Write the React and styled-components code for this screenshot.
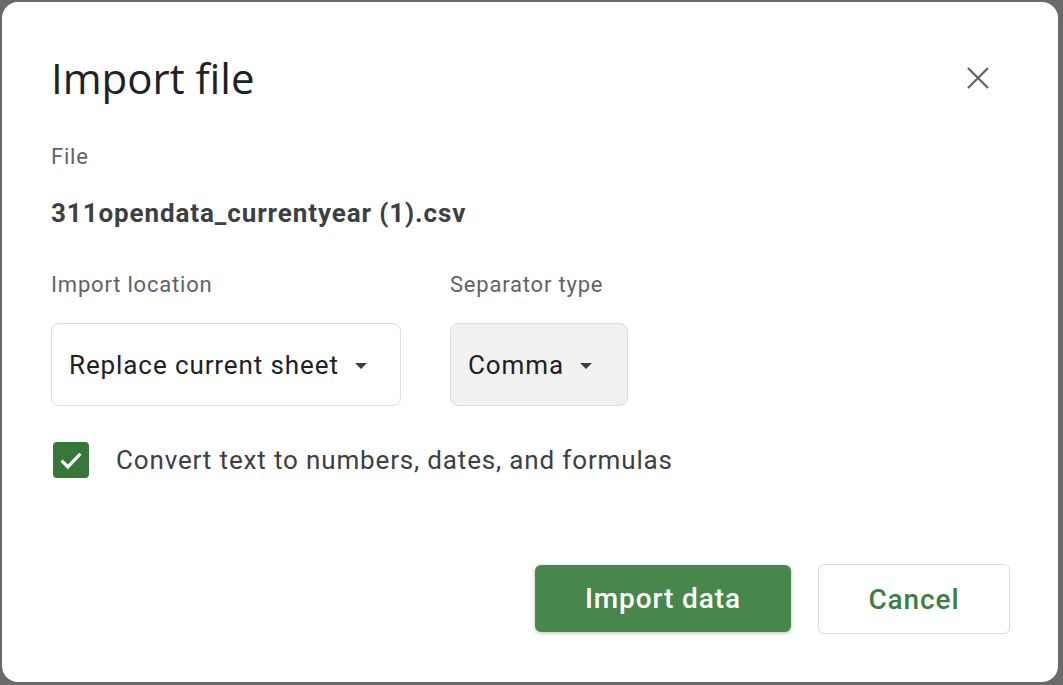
import styled, { createGlobalStyle } from "styled-components";

const Global = createGlobalStyle`
  html, body {
    margin: 0;
    padding: 0;
    background: #6a6a6a;
    font-family: Roboto, "Liberation Sans", Arial, sans-serif;
  }
  * { box-sizing: border-box; }
`;

// --- Styled components ---
const Dialog = styled.div`
  margin: 2px 5px 3px 2px;
  height: calc(100vh - 5px);
  background: #fff;
  border-radius: 16px;
  padding: 50px 48px 0 49px;
  display: flex;
  flex-direction: column;
`;

const Header = styled.div`
  display: flex;
  align-items: center;
  justify-content: space-between;
`;

const Title = styled.h1`
  margin: 0;
  font-family: "Open Sans", Roboto, sans-serif;
  font-weight: 400;
  font-size: 42px;
  line-height: 52px;
  color: #202124;
`;

const Close = styled.button`
  border: 0;
  background: none;
  padding: 0;
  width: 32px;
  height: 32px;
  margin-right: 16px;
  display: flex;
  align-items: center;
  justify-content: center;
  cursor: pointer;
`;

const Label = styled.div`
  font-size: 22px;
  line-height: 24px;
  letter-spacing: 0.8px;
  color: #5f6368;
  margin-top: ${({ top }) => top || 0}px;
`;

const FileName = styled.div`
  margin-top: 30px;
  font-size: 26px;
  line-height: 28px;
  letter-spacing: 0.9px;
  font-weight: 700;
  color: #3c4043;
`;

const Row = styled.div`
  display: flex;
  gap: 49px;
  margin-top: 46px;
`;

const Field = styled.div`
  display: flex;
  flex-direction: column;
  gap: 26px;
`;

const Select = styled.div`
  width: ${({ w }) => w}px;
  height: 83px;
  border: 1px solid #dadce0;
  border-radius: 8px;
  background: ${({ filled }) => (filled ? "#f1f1f1" : "#fff")};
  display: flex;
  align-items: center;
  padding-left: 17px;
  gap: 16px;
  font-size: 26px;
  letter-spacing: 0.9px;
  color: #202124;
`;

const Caret = styled.span`
  width: 0;
  height: 0;
  border-left: 6px solid transparent;
  border-right: 6px solid transparent;
  border-top: 6px solid #3c4043;
  margin-top: 2px;
`;

const CheckRow = styled.label`
  display: flex;
  align-items: center;
  gap: 27px;
  margin-top: 36px;
  margin-left: 2px;
  font-size: 26px;
  letter-spacing: 0.85px;
  color: #3c4043;
`;

const Box = styled.span`
  width: 36px;
  height: 36px;
  border-radius: 4px;
  background: #37773a;
  display: flex;
  align-items: center;
  justify-content: center;
`;

const Actions = styled.div`
  display: flex;
  justify-content: flex-end;
  gap: 27px;
  margin-top: 86px;
`;

const Button = styled.button`
  width: ${({ w }) => w}px;
  height: ${({ primary }) => (primary ? 67 : 70)}px;
  margin-top: ${({ primary }) => (primary ? 1 : 0)}px;
  border-radius: 6px;
  font-family: Roboto, sans-serif;
  font-size: 28px;
  font-weight: 500;
  letter-spacing: 0.9px;
  cursor: pointer;
  border: ${({ primary }) => (primary ? "0" : "1px solid #dadce0")};
  background: ${({ primary }) => (primary ? "#48874b" : "#fff")};
  color: ${({ primary }) => (primary ? "#fff" : "#3b7f41")};
  box-shadow: ${({ primary }) =>
    primary ? "0 1px 4px rgba(72,135,75,0.45)" : "none"};
`;

// --- Component ---
export default function App() {
  return (
    <>
      <Global />
      <Dialog>
        <Header>
          <Title>Import file</Title>
          <Close aria-label="Close">
            <svg width="24" height="24" viewBox="0 0 24 24">
              <path
                d="M2 2 L22 22 M22 2 L2 22"
                stroke="#5f6368"
                strokeWidth="2.2"
                fill="none"
              />
            </svg>
          </Close>
        </Header>

        <Label top={41}>File</Label>
        <FileName>311opendata_currentyear (1).csv</FileName>

        <Row>
          <Field>
            <Label>Import location</Label>
            <Select w={350}>
              Replace current sheet <Caret />
            </Select>
          </Field>
          <Field>
            <Label>Separator type</Label>
            <Select w={178} filled>
              Comma <Caret />
            </Select>
          </Field>
        </Row>

        <CheckRow>
          <Box>
            <svg width="30" height="30" viewBox="0 0 24 24">
              <path
                d="M4.5 12.5 L9.5 17.5 L19.5 7"
                stroke="#fff"
                strokeWidth="2.6"
                fill="none"
              />
            </svg>
          </Box>
          Convert text to numbers, dates, and formulas
        </CheckRow>

        <Actions>
          <Button primary w={256}>Import data</Button>
          <Button w={192}>Cancel</Button>
        </Actions>
      </Dialog>
    </>
  );
}
